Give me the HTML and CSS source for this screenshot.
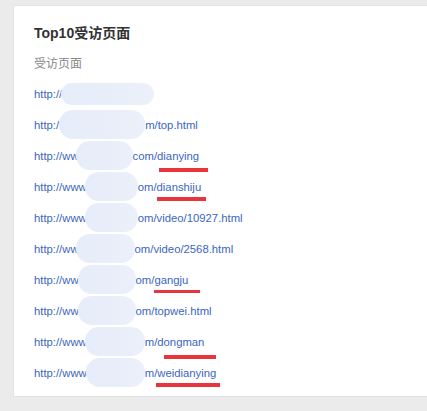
FILE: index.html
```html
<!DOCTYPE html>
<html lang="zh">
<head>
<meta charset="utf-8">
<title>Top10受访页面</title>
<link rel="stylesheet" href="styles.css">
</head>
<body>
<div class="card">
    <h3 class="card-title">Top10受访页面</h3>
    <div class="col-head">受访页面</div>
    <ul class="pages">
        <li class="row"><a href="#">http://<span class="blob b1"></span></a></li>
        <li class="row"><a href="#">http:/<span class="blob b2"></span>m/top.html</a></li>
        <li class="row"><a href="#">http://ww<span class="blob b3"></span>com/dianying</a><span class="mark m3"></span></li>
        <li class="row"><a href="#">http://www<span class="blob b4"></span>om/dianshiju</a><span class="mark m4"></span></li>
        <li class="row"><a href="#">http://www<span class="blob b5"></span>om/video/10927.html</a></li>
        <li class="row"><a href="#">http://ww<span class="blob b6"></span>om/video/2568.html</a></li>
        <li class="row"><a href="#">http://ww<span class="blob b7"></span>om/gangju</a><span class="mark m7"></span></li>
        <li class="row"><a href="#">http://ww<span class="blob b8"></span>om/topwei.html</a></li>
        <li class="row"><a href="#">http://www<span class="blob b9"></span>m/dongman</a><span class="mark m9"></span></li>
        <li class="row"><a href="#">http://www<span class="blob b10"></span>m/weidianying</a><span class="mark m10"></span></li>
    </ul>
</div>
</body>
</html>
```

FILE: styles.css
```css
html, body {
    margin: 0;
    background: #ebebeb;
    font-family: "Liberation Sans", Arial, "Noto Sans CJK SC", sans-serif;
    overflow: hidden;
}

.card {
    margin: 5px -4px 0 13px;
    height: 392px;
    background: #fff;
    border: 1px solid #e2e2e2;
    padding: 17px 0 0 20px;
    box-sizing: border-box;
}

.card-title {
    margin: 0;
    font-size: 14px;
    line-height: 20px;
    font-weight: bold;
    color: #333;
}

.col-head {
    margin-top: 11px;
    font-size: 12px;
    line-height: 20px;
    color: #888;
}

.pages {
    list-style: none;
    margin: 4px 0 0;
    padding: 0;
}

.row {
    position: relative;
    display: flex;
    align-items: center;
    height: 31px;
}

.row a {
    display: flex;
    align-items: center;
    color: #3c66c0;
    font-size: 11.3px;
    text-decoration: none;
}

/* blurred-out part of the address */
.blob {
    position: relative;
    height: 29px;
    border-radius: 14px;
    background: linear-gradient(90deg, #e6ecf9, #ebf0fa);
}
.b1 { width: 93px; margin-left: -1px; height: 22px; border-radius: 11px; }
.b2 { width: 86px; }
.b3 { width: 57px; margin-left: -3px; }
.b4 { width: 53px; margin-left: -2px; }
.b5 { width: 53px; margin-left: -2px; }
.b6 { width: 59px; margin-left: -3px; }
.b7 { width: 58px; margin-left: -1px; }
.b8 { width: 58px; margin-left: -1px; }
.b9 { width: 60px; margin-left: -2px; }
.b10 { width: 59px; margin-left: -1px; }

/* red marker lines */
.mark {
    position: absolute;
    height: 4px;
    background: #e8353b;
}
.m3 { left: 125px; top: 28px; width: 49px; }
.m4 { left: 123px; top: 26px; width: 49px; }
.m7 { left: 120px; top: 26px; width: 46px; height: 3px; }
.m9 { left: 130px; top: 29px; width: 52px; }
.m10 { left: 122px; top: 26px; width: 64px; }
```
